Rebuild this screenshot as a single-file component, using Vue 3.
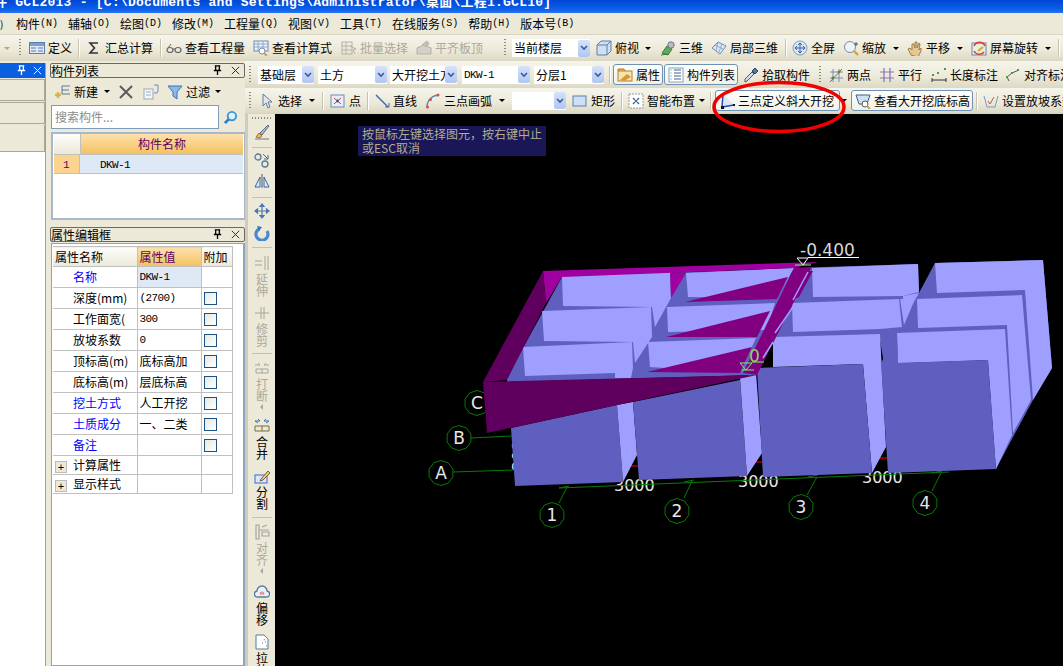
<template>
  <div class="app">
    <div class="titlebar"><span class="title-text">件 GCL2013 - [C:\Documents and Settings\Administrator\桌面\工程1.GCL10]</span></div>

    <div class="menubar">
      <span class="menu-cut">)</span>
      <span v-for="m in menus" :key="m[0]" class="menu-item">{{ m[0] }}<span class="key">({{ m[1] }})</span></span>
    </div>

    <div class="toolbar row1">
      <div v-for="(t, i) in row1" :key="i" class="slot" :style="{ width: t.w + 'px' }">
        <ToolItem :t="t" />
      </div>
    </div>

    <div class="main">
      <div class="left">
        <div class="dock-narrow">
          <div class="dock-head">
            <svg class="head-ico" viewBox="0 0 12 12"><path d="M3 1h6M4 1v5M8 1v5M2 6h8M6 6v5" fill="none" stroke="#fff" stroke-width="1.4"/></svg>
            <svg class="head-ico" viewBox="0 0 12 12"><path d="M2 2l8 8M10 2l-8 8" stroke="#fff" stroke-width="1"/></svg>
          </div>
          <div class="tile"></div>
          <div class="tile"></div>
          <div class="tile last"></div>
          <div class="narrow-body"></div>
        </div>

        <div class="dock-wide">
          <div class="panel-head">
            <span>构件列表</span>
            <svg class="head-ico" viewBox="0 0 12 12"><path d="M3 1h6M4 1v5M8 1v5M2 6h8M6 6v5" fill="none" stroke="#000" stroke-width="1.4"/></svg>
            <svg class="head-ico" viewBox="0 0 12 12"><path d="M2 2l8 8M10 2l-8 8" stroke="#222" stroke-width="1"/></svg>
          </div>
          <div class="list-tools">
            <svg class="ico" viewBox="0 0 16 16"><path d="M7 2h8M7 6h7M7 10h8" stroke="#5a7a9a" fill="none"/><path d="M7 2v8" stroke="#5a7a9a"/><path d="M3 8v6M0 11h6" stroke="#e0b040" stroke-width="2.4"/></svg>
            <span class="new-lbl">新建</span>
            <i class="arrow"></i>
            <svg class="ico del" viewBox="0 0 16 16"><path d="M2 2l12 12M14 2L2 14" stroke="#5c5c5c" stroke-width="2"/></svg>
            <svg class="ico copy" viewBox="0 0 16 16"><rect x="1" y="5" width="9" height="10" fill="#f4f6fa" stroke="#9ab"/><path d="M3 8h5M3 11h5" stroke="#9ab"/><path d="M11 1h4v6M11 9l3 0 1-2" fill="none" stroke="#6a8cc0"/></svg>
            <svg class="ico filter" viewBox="0 0 16 16"><path d="M1 2h14L10 8v7L6 12V8z" fill="#8fb8e8" stroke="#3a72b8"/></svg>
            <span class="filter-lbl">过滤</span>
            <i class="arrow"></i>
          </div>
          <div class="search-row">
            <div class="search">搜索构件...</div>
            <svg class="search-ico" viewBox="0 0 16 16"><circle cx="9.5" cy="6.5" r="4.5" fill="#dff0fb" stroke="#3a94d8" stroke-width="2"/><path d="M6 10l-4 4" stroke="#2a7cc4" stroke-width="3"/></svg>
          </div>
          <div class="list-box">
            <div class="list-head"><div class="corner"></div><div class="col-name">构件名称</div></div>
            <div class="list-row"><div class="num">1</div><div class="row-name">DKW-1</div></div>
          </div>

          <div class="panel-head prop-head">
            <span>属性编辑框</span>
            <svg class="head-ico" viewBox="0 0 12 12"><path d="M3 1h6M4 1v5M8 1v5M2 6h8M6 6v5" fill="none" stroke="#000" stroke-width="1.4"/></svg>
            <svg class="head-ico" viewBox="0 0 12 12"><path d="M2 2l8 8M10 2l-8 8" stroke="#222" stroke-width="1"/></svg>
          </div>
          <div class="prop-box">
            <table class="props">
              <colgroup><col class="c1" /><col class="c2" /><col class="c3" /></colgroup>
              <thead>
                <tr><th class="h-name">属性名称</th><th class="h-val">属性值</th><th class="h-add">附加</th></tr>
              </thead>
              <tbody>
                <tr v-for="p in props" :key="p.name">
                  <td class="p-name" :class="{ blue: p.blue }">{{ p.name }}</td>
                  <td class="p-val" :class="{ sel: p.sel, mono: p.mono }">{{ p.val }}</td>
                  <td class="p-add"><span v-if="p.check" class="check"></span></td>
                </tr>
                <tr v-for="g in groups" :key="g" class="grp">
                  <td class="g-name"><span class="plus">+</span>{{ g }}</td>
                  <td></td>
                  <td></td>
                </tr>
              </tbody>
            </table>
          </div>
        </div>
      </div>

      <div class="right">
        <div class="toolbar row2">
          <div v-for="(t, i) in row2" :key="i" class="slot" :style="{ width: t.w + 'px' }">
            <ToolItem :t="t" />
          </div>
        </div>
        <div class="toolbar row3">
          <div v-for="(t, i) in row3" :key="i" class="slot" :style="{ width: t.w + 'px' }">
            <ToolItem :t="t" />
          </div>
        </div>
        <div class="work">
          <div class="vbar">
            <div class="vgrip"></div>
            <div v-for="(v, i) in vtools" :key="i" class="vitem" :class="{ off: v.off }" :style="{ height: v.h + 'px' }">
              <div v-if="v.sep" class="vsep"></div>
              <template v-else>
                <svg class="vico" viewBox="0 0 16 16" v-html="icons[v.icon]"></svg>
                <span v-if="v.label" class="vlabel">{{ v.label }}</span>
                <i v-if="v.more" class="vmore"></i>
              </template>
            </div>
          </div>

          <div class="canvas">
            <svg class="scene" viewBox="275 114 788 552" width="788" height="552">
              <!-- dimensions sit behind the blocks -->
              <text v-for="d in dims" :key="d[0]" class="dim" :x="d[0]" :y="d[1]">3000</text>
              <text class="dim" transform="translate(524 471) rotate(-90)">3000</text>

              <g stroke="#0a7a0a" fill="none">
                <path d="M559 488L949 472M453 472L514 470M471 438L511 436M489 403L515 400" />
                <path d="M567 487L559 503M692 481L684 498M817 477L807 495M941 473L932 491" />
                <path d="M559 488l10-2M684 482l10-2M808 477l10-2M932 473l10-2" />
                <polygon v-for="a in axes" :key="a.t" :points="hex(a.x, a.y)" />
              </g>
              <text v-for="a in axes" :key="a.t + 't'" class="axis" :x="a.x" :y="a.y + 6">{{ a.t }}</text>
              <path d="M630 466h8M755 462h7M880 458h7" stroke="#ff0000" stroke-width="1" />

              <!-- right hand rows of columns -->
              <polygon class="dark" points="793,268 918,264 919,293 935,263 1043,260 1052,368 1033,400 1013,437 996,469 988,360 884,364 880,340 773,337" />
              <polygon class="light" points="812,268 918,264 919,292 903,296 813,297" />
              <polygon class="light" points="903,296 919,293 904,319" />
              <polygon class="light" points="792,303 899,299 902,327 880,329 793,332" />
              <polygon class="light" points="900,299 915,299 904,325" />
              <polygon class="light" points="935,263 1043,260 1052,368 1033,400 1025,290 937,293" />
              <polygon class="light" points="917,299 1022,295 1031,400 1013,433 1007,325 918,328" />
              <polygon class="light" points="897,333 1005,329 1012,435 996,469 988,360 898,363" />
              <polygon class="light" points="773,337 880,334 886,447 872,473 863,364 773,367" />

              <polygon class="dark" points="511,428 617,405 623,482 515,486" />
              <polygon class="light" points="617,405 633,402 637,455 623,482" />
              <polygon class="dark" points="633,402 740,380 747,476 639,480" />
              <polygon class="light" points="740,378 756,373 762,453 747,476" />
              <polygon class="dark" points="757,368 863,364 872,473 763,477" />
              <polygon class="dark" points="881,363 897,333 898,363 988,360 996,469 888,473" />

              <!-- the sloped pit -->
              <polygon class="dark" points="562,277 507,377 507,382 757,375 793,268" />
              <polygon class="light" points="562,276 670,272 671,298 655,327 652,307 563,306" />
              <polygon class="light" points="542,311 651,307 652,337 635,363 633,342 544,341" />
              <polygon class="light" points="523,347 632,342 633,368 631,378 615,378 615,373 525,376" />
              <polygon class="light" points="686,273 794,268 777,298 688,297" />
              <polygon class="light" points="667,307 775,303 767,330 668,332" />
              <polygon class="light" points="648,342 756,338 740,373 650,367" />
              <polygon class="plum" points="685,302 788,277 777,299" />
              <polygon class="plum" points="666,337 770,311 757,337" />
              <polygon class="plum" points="647,372 752,347 740,373" />
              <polygon class="plum" points="794,268 811,268 757,375 743,373" />
              <polygon class="plum" points="813,271 799,297 794,299 808,271" />
              <path d="M808 272L793 300M793 307L775 333M773 342L763 358" stroke="#9f9fff" stroke-width="1.5" />
              <polygon class="magenta" points="543,271 818,262 794,268 562,277 546,303" />
              <polygon class="magenta" points="670,272 686,273 671,298" />
              <polygon class="wall" points="543,271 483,382 507,380 546,303" />
              <polygon class="wall" points="483,382 757,375 487,433" />

              <!-- elevation marks -->
              <text class="elev" x="800" y="256">-0.400</text>
              <path d="M808 257.5h51M797 258h11l-5 7z" fill="none" stroke="#fff" />
              <path d="M795 265h16" stroke="#66ff66" />
              <text class="elev-green" x="749" y="362">0</text>
              <path d="M740 363h12l-6 7zM742 370h12M752 362h12" fill="none" stroke="#66ff66" />
            </svg>
            <div class="hint">按鼠标左键选择图元，按右键中止<br />或ESC取消</div>
          </div>
        </div>
      </div>
    </div>

    <svg class="mark" width="140" height="58" viewBox="0 0 140 58">
      <ellipse cx="70" cy="29" rx="65" ry="24.5" fill="none" stroke="#f00000" stroke-width="3.5" />
    </svg>
  </div>
</template>

<script setup>
import { h } from 'vue'

const icons = {
  define: '<rect x=".5" y="2.5" width="15" height="11" fill="#dfe8f5" stroke="#5a7fae"/><rect x="1" y="3" width="14" height="3" fill="#7f9fcc"/><path d="M2 8h5M2 11h5M9 8h5M9 11h5" stroke="#5a7fae"/>',
  sigma: '<path d="M12 3H4l4.5 5L4 13h8" fill="none" stroke="#333" stroke-width="1.6"/>',
  glasses: '<ellipse cx="4" cy="10" rx="3" ry="2.5" fill="none" stroke="#666" stroke-width="1.2"/><ellipse cx="12" cy="10" rx="3" ry="2.5" fill="none" stroke="#666" stroke-width="1.2"/><path d="M7 9h2M2 8l3-4" fill="none" stroke="#666"/>',
  calc: '<rect x="1" y="1" width="14" height="10" fill="#eef2f8" stroke="#6a8cb8"/><path d="M1 4h14M1 7h14M5 1v10M10 1v10" stroke="#8fa8c8"/><circle cx="9" cy="11" r="3" fill="#fff" stroke="#6a8cb8"/><path d="M11 13l3 3" stroke="#d8a040" stroke-width="2"/>',
  batch: '<rect x="1" y="2" width="10" height="12" fill="none" stroke="#b4b2a8"/><path d="M1 6h10M1 10h10M5 2v12M9 6l6 3-3 1 2 4" fill="none" stroke="#b4b2a8"/>',
  flat: '<path d="M1 14V8l7-3 7 3v6z" fill="#d4d2c6" stroke="#b4b2a8"/><path d="M6 5l5-4 2 3-4 3" fill="#c4c2b6" stroke="#b4b2a8"/>',
  top: '<path d="M1 5l4-4h10v10l-4 4H1z" fill="#cfe0f2" stroke="#5a7fae"/><path d="M1 5h10v10M11 5l4-4" fill="none" stroke="#5a7fae"/>',
  d3: '<path d="M2 13l5-7 5 3-4 6z" fill="#5fa85f" stroke="#3a7a3a"/><circle cx="11" cy="5" r="3.2" fill="#b8bcc0" stroke="#777"/><path d="M1 15l7-1" stroke="#3a7a3a"/>',
  local: '<path d="M1 8l6-6 8 4-6 8z" fill="#dce8f6" stroke="#6a8cb8"/><path d="M4 5l8 4M7 2l-2 9M11 4l-3 8" stroke="#8fa8c8"/>',
  full: '<circle cx="8" cy="8" r="7" fill="#d8e4f4" stroke="#7f9cc4"/><path d="M8 3v10M3 8h10M8 3l-2 2M8 3l2 2M8 13l-2-2M8 13l2-2M3 8l2-2M3 8l2 2M13 8l-2-2M13 8l-2 2" fill="none" stroke="#3a5f9a"/>',
  zoom: '<circle cx="7" cy="7" r="5.5" fill="#eef3fa" stroke="#7a8ca8"/><path d="M11 11l4 4" stroke="#d8a040" stroke-width="2.4"/><path d="M13 2v4M11 4h4" stroke="#555"/>',
  hand: '<path d="M4 15l-3-6 2-1 2 2V4l2 0 1 4V2h2l0 6 2-5 1 1-1 6 2-2v3l-3 6z" fill="#e8c890" stroke="#9a8050"/>',
  rotate: '<rect x="1" y="3" width="14" height="12" fill="#e8f0d8" stroke="#5a8cc0"/><path d="M3 6a6 6 0 0 1 11 0M13 12a6 6 0 0 1-10-1" fill="none" stroke="#e04040" stroke-width="1.6"/><path d="M7 11l5-4" stroke="#d8a040" stroke-width="2"/>',
  prop: '<rect x="1" y="4" width="14" height="10" fill="#f8e4b0" stroke="#b08030"/><path d="M1 4V2h6l1 2" fill="#e8a040" stroke="#b08030"/><path d="M3 13l7-6 4 3-7 4z" fill="#d89830"/>',
  list: '<rect x="1" y="1" width="14" height="14" fill="#fff" stroke="#8aa0bc"/><path d="M6 3h7M6 6h7M6 9h7M6 12h7" stroke="#40608a"/><path d="M2.5 3h2M2.5 6h2M2.5 9h2M2.5 12h2" stroke="#3a9a8a" stroke-dasharray="1 1"/>',
  pick: '<path d="M2 15l2-1 7-7-2-2-7 7z" fill="#d0e0f0" stroke="#556"/><path d="M9 4l3 3 3-3-3-3z" fill="#4a7ab8" stroke="#345"/>',
  two: '<path d="M2 5h13M2 11h13M5 2v13M11 2v13" stroke="#7a8ac0"/><path d="M2 15L14 2" stroke="#d04040"/><circle cx="5" cy="11" r="1.4" fill="#3a9a3a"/><circle cx="11" cy="5" r="1.4" fill="#3a9a3a"/>',
  para: '<path d="M1 5h14M1 11h14" stroke="#b06aa0" stroke-width="1.2"/><path d="M5 1v14M11 1v14" stroke="#6a7ac0" stroke-width="1.2"/>',
  len: '<path d="M1 11v4M15 11v4M1 13h14" stroke="#333"/><rect x="1" y="7" width="2" height="2" fill="#4a9a4a"/><rect x="6" y="5" width="2" height="2" fill="#4a9a4a"/><rect x="13" y="1" width="2" height="2" fill="#4a9a4a"/>',
  align: '<path d="M2 10l5-4 7-3M4 14l-2-4" fill="none" stroke="#555"/><rect x="1" y="9" width="2" height="2" fill="#4a9a4a"/><rect x="6" y="5" width="2" height="2" fill="#4a9a4a"/><rect x="12" y="2" width="2" height="2" fill="#4a9a4a"/>',
  cursor: '<path d="M4 1v12l3-3 2 5 2-1-2-5h4z" fill="#dfe6f2" stroke="#6a7a94"/>',
  dot: '<rect x="1" y="2" width="13" height="12" fill="#e8eef8" stroke="#6a8cb8"/><path d="M4 5l7 6M11 5l-7 6" stroke="#d04040"/><circle cx="7.5" cy="8" r="1.4" fill="#3a5a9a"/>',
  line: '<path d="M2 2l12 12" stroke="#3a6aa8" stroke-width="1.4"/><path d="M11 14h4v-4" fill="none" stroke="#3a6aa8"/>',
  arc: '<path d="M2 14C2 8 6 3 13 2" fill="none" stroke="#5a8ab8" stroke-width="1.4"/><circle cx="2.5" cy="14" r="1.5" fill="#d85050"/><circle cx="5.5" cy="6.5" r="1.5" fill="#d85050"/><circle cx="13" cy="2" r="1.5" fill="#d85050"/>',
  rect: '<rect x="1" y="3" width="13" height="10" fill="#cfe0f4" stroke="#5a7fae"/>',
  smart: '<rect x="1" y="1" width="14" height="14" fill="#fff" stroke="#999" stroke-dasharray="2 1"/><path d="M5 5l2 2M11 5L9 7M5 11l2-2M11 11L9 9" stroke="#3a6aa8" stroke-width="1.4"/><circle cx="8" cy="8" r="1" fill="#333"/>',
  tri: '<path d="M3 14L4 1 15 12z" fill="#dce8f8"/><path d="M4 1L3 14 15 12" fill="none" stroke="#2a4ab0" stroke-width="1.5"/><rect x="2" y="13" width="3" height="3" fill="#111"/><rect x="14" y="11" width="2" height="2" fill="#111"/>',
  base: '<path d="M1 2h14l-3 9H4z" fill="#cfe0f2" stroke="#40608a"/><circle cx="10" cy="11" r="3" fill="#fff" stroke="#555"/><path d="M12 13l3 3" stroke="#d8a040" stroke-width="2"/>',
  slope: '<path d="M1 3l3 11h8l3-11" fill="none" stroke="#7a9ac8"/><path d="M5 8l2 3 4-7" fill="none" stroke="#d05050"/>',
  brush: '<path d="M1 15h14" stroke="#777"/><path d="M2 13l3-4 3 3-2 2z" fill="#e8b860" stroke="#a07830"/><path d="M6 9l8-8 1 1-7 9z" fill="#a8b8d0" stroke="#607090"/>',
  scissor: '<circle cx="4" cy="5" r="3" fill="none" stroke="#5a7a9a" stroke-width="1.3"/><circle cx="11" cy="12" r="3" fill="none" stroke="#5a7a9a" stroke-width="1.3"/><path d="M9 2l5 5M14 3v4h-4" fill="none" stroke="#4a6a90"/>',
  mirror: '<path d="M8 1v14" stroke="#555"/><path d="M6 4v10H1zM10 4v10h5z" fill="#dfe8f5" stroke="#3a64a8"/>',
  move: '<path d="M8 1v14M1 8h14M8 1L6 3.5h4zM8 15l-2-2.5h4zM1 8l2.5-2v4zM15 8l-2.5-2v4z" fill="#4a78b0" stroke="#4a78b0" stroke-width="1.2"/>',
  spin: '<path d="M13 6a6 6 0 1 1-8-2" fill="none" stroke="#4a88d0" stroke-width="3.2"/><path d="M3 1l5 1-3 4z" fill="#3a70b8"/>',
  extend: '<path d="M1 6h7M1 10h7" stroke="#a8a69c" stroke-width="1.2"/><path d="M11 1v14M14 1v14" stroke="#a8a69c"/>',
  trim: '<path d="M1 8h14M7 2v12M10 2v12" stroke="#a8a69c"/>',
  brk: '<path d="M1 5h5l-2-2M15 5h-5l2-2" fill="none" stroke="#a8a69c"/><path d="M2 9h12v4H2zM8 9v4" fill="none" stroke="#a8a69c"/>',
  merge: '<path d="M1 3h5l-2-2M1 3l3 2M15 3h-5l2-2M15 3l-3 2" fill="none" stroke="#3a70c0"/><path d="M1 8h14v5H1zM8 8v5" fill="none" stroke="#7a6a40"/>',
  split: '<rect x="1" y="7" width="12" height="8" fill="#dce8f8" stroke="#3a64d8"/><path d="M7 11l7-8 2 2-7 7-3 1z" fill="#e8c880" stroke="#806030"/>',
  alignv: '<path d="M2 1v14h3V1zM8 3l5-2M5 6h10M8 12h7V8H8z" fill="none" stroke="#a8a69c" stroke-width="1.2"/>',
  offset: '<path d="M4 13a3 3 0 0 1-1-6 5 5 0 0 1 10 0 3 3 0 0 1-1 6z" fill="#eaf0f8" stroke="#5a7a9a" stroke-width="1.3"/><path d="M6 10a2 2 0 1 1 4 0z" fill="none" stroke="#e07070"/>',
  stretch: '<path d="M2 1h8l4 4v10H2z" fill="#fff" stroke="#5a7a9a"/><path d="M10 5l2 4M12 12h1M8 9h1" stroke="#5a7a9a" stroke-dasharray="1 1"/>'
}

// small renderer so the three toolbars share one item shape, styled from the plain style block
const ToolItem = (props) => {
  const t = props.t
  if (t.kind === 'spacer') return null
  if (t.kind === 'grip') return h('i', { class: 'tb-grip' })
  if (t.kind === 'sep') return h('i', { class: 'tb-sep' })
  if (t.kind === 'arrow') return h('i', { class: ['tb-arrow', { dim: t.off }] })
  if (t.kind === 'select') {
    return h('div', { class: 'combo', style: { width: t.box + 'px' } }, [
      h('span', { class: ['combo-text', { latin: t.latin }] }, t.label),
      h('span', { class: 'combo-btn' }, [
        h('svg', { viewBox: '0 0 8 6', width: 8, height: 6 }, [
          h('path', { d: 'M1 1l3 3 3-3', fill: 'none', stroke: '#3b5a9a', 'stroke-width': 1.6 })
        ])
      ])
    ])
  }
  return h('div', { class: ['tool', { active: t.active, off: t.off }], style: t.active ? { width: t.box + 'px' } : null }, [
    h('svg', { class: 'tool-ico', viewBox: '0 0 16 16', innerHTML: icons[t.icon] }),
    h('span', { class: 'tool-lbl' }, t.label)
  ])
}
ToolItem.props = ['t']

// items carry the x where they begin, the slot width is the distance to the next one
const spread = (items, end) =>
  items.map((t, i) => ({ ...t, w: (i + 1 < items.length ? items[i + 1].x : end) - t.x }))

const row1 = spread([
  { x: 0, kind: 'spacer' },
  { x: 4, kind: 'arrow', off: true },
  { x: 19, kind: 'grip' },
  { x: 29, icon: 'define', label: '定义' },
  { x: 78, kind: 'sep' },
  { x: 86, icon: 'sigma', label: '汇总计算' },
  { x: 160, kind: 'sep' },
  { x: 166, icon: 'glasses', label: '查看工程量' },
  { x: 253, icon: 'calc', label: '查看计算式' },
  { x: 341, icon: 'batch', label: '批量选择', off: true },
  { x: 416, icon: 'flat', label: '平齐板顶', off: true },
  { x: 504, kind: 'grip' },
  { x: 512, kind: 'select', label: '当前楼层', box: 78 },
  { x: 596, icon: 'top', label: '俯视' },
  { x: 645, kind: 'arrow' },
  { x: 660, icon: 'd3', label: '三维' },
  { x: 711, icon: 'local', label: '局部三维' },
  { x: 785, kind: 'sep' },
  { x: 792, icon: 'full', label: '全屏' },
  { x: 843, icon: 'zoom', label: '缩放' },
  { x: 893, kind: 'arrow' },
  { x: 907, icon: 'hand', label: '平移' },
  { x: 957, kind: 'arrow' },
  { x: 971, icon: 'rotate', label: '屏幕旋转' },
  { x: 1045, kind: 'arrow' },
  { x: 1058, kind: 'sep' }
], 1063)

const row2 = spread([
  { x: 245, kind: 'spacer' },
  { x: 249, kind: 'grip' },
  { x: 258, kind: 'select', label: '基础层', box: 56 },
  { x: 318, kind: 'select', label: '土方', box: 69 },
  { x: 390, kind: 'select', label: '大开挖土方', box: 67 },
  { x: 462, kind: 'select', label: 'DKW-1', box: 68, latin: true },
  { x: 534, kind: 'select', label: '分层1', box: 70 },
  { x: 609, kind: 'sep' },
  { x: 613, icon: 'prop', label: '属性', active: true, box: 50 },
  { x: 664, icon: 'list', label: '构件列表', active: true, box: 74 },
  { x: 743, icon: 'pick', label: '拾取构件' },
  { x: 819, kind: 'grip' },
  { x: 828, icon: 'two', label: '两点' },
  { x: 879, icon: 'para', label: '平行' },
  { x: 931, icon: 'len', label: '长度标注' },
  { x: 1005, icon: 'align', label: '对齐标注' }
], 1063)

const row3 = spread([
  { x: 245, kind: 'spacer' },
  { x: 249, kind: 'grip' },
  { x: 259, icon: 'cursor', label: '选择' },
  { x: 309, kind: 'arrow' },
  { x: 322, kind: 'sep' },
  { x: 330, icon: 'dot', label: '点' },
  { x: 367, kind: 'sep' },
  { x: 374, icon: 'line', label: '直线' },
  { x: 425, icon: 'arc', label: '三点画弧' },
  { x: 499, kind: 'arrow' },
  { x: 512, kind: 'select', label: '', box: 54 },
  { x: 572, icon: 'rect', label: '矩形' },
  { x: 621, kind: 'sep' },
  { x: 628, icon: 'smart', label: '智能布置' },
  { x: 699, kind: 'arrow' },
  { x: 710, kind: 'sep' },
  { x: 715, icon: 'tri', label: '三点定义斜大开挖', active: true, box: 125 },
  { x: 841, kind: 'arrow' },
  { x: 851, icon: 'base', label: '查看大开挖底标高', active: true, box: 122 },
  { x: 976, kind: 'sep' },
  { x: 983, icon: 'slope', label: '设置放坡系数' }
], 1063)

const menus = [
  ['构件', 'N'], ['辅轴', 'O'], ['绘图', 'D'], ['修改', 'M'], ['工程量', 'Q'], ['视图', 'V'],
  ['工具', 'T'], ['在线服务', 'S'], ['帮助', 'H'], ['版本号', 'B']
]

const props = [
  { name: '名称', val: 'DKW-1', blue: true, sel: true, mono: true },
  { name: '深度(mm)', val: '(2700)', check: true, mono: true },
  { name: '工作面宽(', val: '300', check: true, mono: true },
  { name: '放坡系数', val: '0', check: true, mono: true },
  { name: '顶标高(m)', val: '底标高加', check: true },
  { name: '底标高(m)', val: '层底标高', check: true },
  { name: '挖土方式', val: '人工开挖', blue: true, check: true },
  { name: '土质成分', val: '一、二类', blue: true, check: true },
  { name: '备注', val: '', blue: true, check: true }
]
const groups = ['计算属性', '显示样式']

// y is where each item starts on screen, the height is the distance to the next one
const vtools = [
  { y: 124, icon: 'brush' }, { y: 147, sep: true }, { y: 152, icon: 'scissor' }, { y: 173, icon: 'mirror' },
  { y: 197, sep: true }, { y: 203, icon: 'move' }, { y: 225, icon: 'spin' }, { y: 247, sep: true },
  { y: 255, icon: 'extend', label: '延伸', off: true },
  { y: 305, icon: 'trim', label: '修剪', off: true }, { y: 353, sep: true },
  { y: 360, icon: 'brk', label: '打断', off: true, more: true },
  { y: 418, icon: 'merge', label: '合并' },
  { y: 468, icon: 'split', label: '分割' }, { y: 517, sep: true },
  { y: 524, icon: 'alignv', label: '对齐', off: true, more: true },
  { y: 584, icon: 'offset', label: '偏移' },
  { y: 634, icon: 'stretch', label: '拉伸' }
].map((v, i, all) => ({ ...v, h: (all[i + 1] ? all[i + 1].y : 670) - v.y }))

const axes = [
  { t: 'A', x: 441, y: 473 },
  { t: 'B', x: 459, y: 438 },
  { t: 'C', x: 477, y: 403 },
  { t: '1', x: 552, y: 515 },
  { t: '2', x: 677, y: 511 },
  { t: '3', x: 801, y: 507 },
  { t: '4', x: 925, y: 503 }
]
const dims = [[614, 491], [738, 487], [862, 483]]

const hex = (cx, cy) =>
  Array.from({ length: 10 }, (_, i) => {
    const a = (i * Math.PI) / 5 + Math.PI / 10
    return `${(cx + 12.5 * Math.cos(a)).toFixed(1)},${(cy + 12.5 * Math.sin(a)).toFixed(1)}`
  }).join(' ')
</script>

<style>
html, body { margin: 0; background: #ece9d8; }

/* toolbar items come from a render function, scoped ids don't reach them */
.tool { display: flex; align-items: center; gap: 3px; }
.tool.off { color: #aca899; }
.tool.active {
  height: 21px;
  box-sizing: border-box;
  padding-left: 3px;
  border: 1px solid #6f92b4;
  border-radius: 3px;
  background: linear-gradient(#fdfdfb, #f2f1e8);
}
.tool-ico { width: 16px; height: 16px; flex: none; }
.tool-lbl { line-height: 14px; }
.tb-grip {
  display: block;
  width: 2px;
  height: 18px;
  background: repeating-linear-gradient(#8a8a80 0 1px, transparent 1px 3px);
}
.tb-sep { display: block; width: 1px; height: 18px; background: #c5c2b0; box-shadow: 1px 0 #fff; }
.tb-arrow {
  display: block;
  width: 0;
  height: 0;
  border: 3px solid transparent;
  border-top: 3px solid #000;
  border-bottom: 0;
}
.tb-arrow.dim { border-top-color: #aca899; }
.combo {
  display: flex;
  align-items: center;
  height: 18px;
  background: #fff;
  overflow: hidden;
}
.combo-text { flex: 1; min-width: 0; overflow: hidden; padding-left: 2px; }
.combo-text.latin { font: 11px/14px "Liberation Mono", monospace; letter-spacing: -0.6px; }
.combo-btn {
  flex: none;
  width: 12px;
  height: 17px;
  display: flex;
  align-items: center;
  justify-content: center;
  border-radius: 2px;
  background: linear-gradient(#d6e2fb, #b0c6f2);
}
</style>

<style scoped>
.app {
  position: relative;
  width: 1063px;
  height: 666px;
  overflow: hidden;
  background: #ece9d8;
  font: 12px/14px "Noto Sans CJK SC", "Liberation Sans", sans-serif;
  color: #000;
}
.titlebar {
  height: 13px;
  overflow: hidden;
  background: linear-gradient(#0046d5, #0a5fe8 70%, #2a74f0);
  color: #fff;
}
.title-text {
  display: block;
  margin: -5px 0 0 -6px;
  font: bold 13px/15px "Liberation Mono", "Noto Sans CJK SC", monospace;
  letter-spacing: 0.25px;
  white-space: nowrap;
}
.menubar {
  height: 22px;
  display: flex;
  align-items: center;
  gap: 10px;
  white-space: nowrap;
  background: #ece9d8;
  border-bottom: 1px solid #d8d4c0;
  box-sizing: border-box;
}
.menu-cut { width: 6px; font-size: 10px; }
.menu-item { display: inline-flex; }
.key { font: 10px/14px "Liberation Mono", monospace; width: 18px; text-align: center; }
.toolbar {
  display: flex;
  align-items: center;
  flex: none;
  background: linear-gradient(#f6f5ec, #ece9d8 60%, #dcd8c4);
  white-space: nowrap;
}
.row1 { height: 26px; }
.row2 { height: 27px; }
.row3 { height: 26px; border-bottom: 1px solid #d8d4c0; box-sizing: border-box; }
.slot { flex: none; display: flex; align-items: center; height: 100%; }
.ico { width: 16px; height: 16px; flex: none; }
.arrow {
  display: block;
  width: 0;
  height: 0;
  border: 3px solid transparent;
  border-top: 3px solid #000;
  border-bottom: 0;
}

.main { display: flex; height: 605px; }
.left { flex: none; width: 245px; display: flex; height: 100%; }
.right { flex: 1; min-width: 0; display: flex; flex-direction: column; }
.dock-narrow {
  width: 45px;
  flex: none;
  display: flex;
  flex-direction: column;
  border-right: 1px solid #8aa4c4;
  margin-top: 2px;
}
.dock-head {
  height: 15px;
  display: flex;
  align-items: center;
  justify-content: flex-end;
  gap: 5px;
  padding-right: 2px;
  background: #0a5fe0;
}
.head-ico { width: 11px; height: 11px; flex: none; }
.tile {
  height: 22px;
  margin-top: 1px;
  background: #ece9d8;
  border: 1px solid #aca899;
  border-left: 0;
  box-sizing: border-box;
}
.tile.last { height: 27px; border-top: 0; }
.narrow-body { flex: 1; background: #fff; }
.dock-wide {
  width: 199px;
  flex: none;
  display: flex;
  flex-direction: column;
  margin-top: 2px;
  padding-left: 4px;
  box-sizing: border-box;
}
.panel-head {
  height: 15px;
  flex: none;
  display: flex;
  align-items: center;
  gap: 7px;
  border: 1px solid #6a6a60;
  border-radius: 2px;
  padding-right: 3px;
  background: #ece9d8;
  box-sizing: border-box;
  line-height: 13px;
}
.panel-head span { flex: 1; }
.list-tools {
  height: 27px;
  flex: none;
  display: flex;
  align-items: center;
  padding-left: 5px;
}
.new-lbl { margin: 0 6px 0 3px; }
.del { margin: 0 9px 0 8px; }
.copy { margin-right: 8px; }
.filter-lbl { margin: 0 5px 0 3px; }
.search-row { height: 27px; flex: none; display: flex; align-items: flex-start; }
.search {
  width: 168px;
  height: 24px;
  margin-left: 1px;
  box-sizing: border-box;
  background: #fff;
  border: 1px solid #7f9db9;
  padding: 4px 3px;
  color: #8c8c8c;
}
.search-ico { width: 15px; height: 15px; margin: 5px 0 0 4px; }
.list-box {
  height: 88px;
  flex: none;
  box-sizing: border-box;
  background: #fff;
  border: 2px solid #a7b8cc;
  border-width: 2px 1px 2px 2px;
  padding: 0 1px;
  margin-left: 1px;
}
.list-head { display: flex; height: 21px; border-bottom: 1px solid #c0c0c0; box-sizing: border-box; }
.corner { width: 26px; background: linear-gradient(#fdfdfb, #ece9d8); border-right: 1px solid #c0c0c0; }
.col-name {
  flex: 1;
  text-align: center;
  line-height: 20px;
  color: #5f0060;
  background: linear-gradient(#fde0ac, #f2c261);
}
.list-row { display: flex; height: 19px; border-bottom: 1px solid #c0c0c0; box-sizing: border-box; }
.num {
  width: 26px;
  box-sizing: border-box;
  padding-left: 9px;
  background: #fdd48f;
  color: #5f0060;
  border-right: 1px solid #c0c0c0;
  font: 11px/20px "Liberation Mono", monospace;
}
.row-name {
  flex: 1;
  background: #dfe8f5;
  padding-left: 20px;
  font: 11px/20px "Liberation Mono", monospace;
  letter-spacing: -0.6px;
}
.prop-head { margin-top: 7px; }
.prop-box {
  flex: 1;
  background: #fff;
  border: 1px solid #8aa4c4;
  border-right-width: 2px;
  margin: 1px 0 0 1px;
  padding: 2px 0 0 1px;
  box-sizing: border-box;
}
.props {
  width: 179px;
  border-collapse: collapse;
  table-layout: fixed;
}
.c1 { width: 84px; }
.c2 { width: 64px; }
.c3 { width: 31px; }
.props th, .props td {
  height: 20px;
  padding: 0;
  border: 1px solid #c0c0c0;
  border-left: 0;
  font-weight: normal;
  white-space: nowrap;
  overflow: hidden;
}
.props th { height: 19px; }
.h-name { text-align: left; padding-left: 2px !important; background: linear-gradient(#fdfdfb, #ece9d8); }
.h-val { text-align: left; padding-left: 2px !important; color: #5f0060; background: linear-gradient(#fde0ac, #f2c261); }
.h-add { text-align: left; padding-left: 2px !important; background: linear-gradient(#fdfdfb, #ece9d8); }
.p-name { padding-left: 20px !important; }
.p-name.blue { color: #0000ff; }
.p-val { padding-left: 2px !important; }
.p-val.mono { font: 11px/14px "Liberation Mono", monospace; letter-spacing: -0.6px; }
.p-val.sel { background: #dfe8f5; }
.p-add { padding-left: 2px !important; }
.check {
  display: block;
  width: 13px;
  height: 13px;
  box-sizing: border-box;
  border: 1px solid #1c5180;
  background: linear-gradient(135deg, #e8e8e0, #fff);
}
.grp td { height: 18px; }
.g-name { padding-left: 2px !important; }
.plus {
  display: inline-block;
  width: 12px;
  height: 12px;
  margin-right: 6px;
  box-sizing: border-box;
  border: 1px solid #bbb;
  background: #ece9d8;
  font: 11px/10px "Liberation Sans", sans-serif;
  text-align: center;
  vertical-align: -1px;
}

.work { flex: 1; min-height: 0; display: flex; }
.vbar {
  width: 30px;
  flex: none;
  display: flex;
  flex-direction: column;
  align-items: center;
  background: #ece9d8;
  border-left: 3px solid #cfccbc;
  box-sizing: border-box;
  overflow: hidden;
}
.vgrip {
  width: 20px;
  height: 2px;
  flex: none;
  margin: 3px 0 5px;
  background: repeating-linear-gradient(90deg, #8a8a80 0 1px, transparent 1px 3px);
}
.vitem {
  flex: none;
  display: flex;
  flex-direction: column;
  align-items: center;
}
.vitem.off { color: #aca899; }
.vico { width: 16px; height: 16px; flex: none; }
.vlabel {
  flex: none;
  writing-mode: vertical-rl;
  white-space: nowrap;
  line-height: 14px;
  margin-top: 2px;
}
.vsep { width: 20px; height: 1px; background: #c5c2b0; }
.vmore {
  display: block;
  margin-top: 2px;
  width: 0;
  height: 0;
  border: 3px solid transparent;
  border-right: 3px solid #aca899;
  border-left: 0;
}
.canvas { position: relative; flex: 1; min-width: 0; background: #000; overflow: hidden; }
.scene { display: block; }
.light { fill: #9f9fff; }
.dark { fill: #5f5fbf; }
.plum { fill: #800080; }
.magenta { fill: #a000a0; }
.wall { fill: #5f005f; }
.dim { fill: #e8e8e8; font: 16px "DejaVu Sans", sans-serif; }
.axis { fill: #e8e8e8; font: 17px "DejaVu Sans", sans-serif; text-anchor: middle; }
.elev { fill: #d8d8d8; font: 17px "DejaVu Sans", sans-serif; }
.elev-green { fill: #90d060; font: 17px "DejaVu Sans", sans-serif; }
.hint {
  position: absolute;
  left: 83px;
  top: 12px;
  width: 188px;
  height: 30px;
  padding: 1px 0 0 4px;
  box-sizing: border-box;
  background: #1a1758;
  color: #b4ad90;
  line-height: 14px;
  white-space: nowrap;
}
.mark { position: absolute; left: 709px; top: 78px; pointer-events: none; }
</style>
